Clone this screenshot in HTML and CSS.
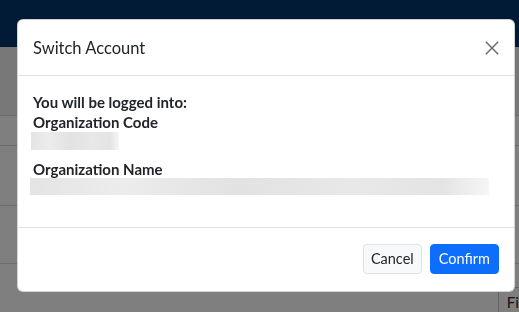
FILE: index.html
```html
<!DOCTYPE html>
<html lang="en">
<head>
  <meta charset="UTF-8">
  <meta name="viewport" content="width=device-width, initial-scale=1.0">
  <title>Switch Account</title>
  <link rel="stylesheet" href="styles.css">
</head>
<body>
  <!-- pagina por tras do modal -->
  <div class="page">
    <nav class="navbar"></nav>
    <div class="table">
      <div class="row row-head"></div>
      <div class="row row-a"></div>
      <div class="row row-b"></div>
      <div class="row row-c"></div>
    </div>
    <div class="toolbar">
      <button class="btn-filter">Filter</button>
    </div>
  </div>

  <!-- Modal -->
  <div class="backdrop">
    <div class="modal">
      <div class="modal-header">
        <h5 class="modal-title">Switch Account</h5>
        <button class="btn-close" aria-label="Close">
          <svg width="14" height="14" viewBox="0 0 14 14">
            <path d="M0.8 0.8 L13.2 13.2 M13.2 0.8 L0.8 13.2" stroke="#6c6c6c" stroke-width="1.5" fill="none"/>
          </svg>
        </button>
      </div>
      <div class="modal-body">
        <div class="label">You will be logged into:</div>
        <div class="label">Organization Code</div>
        <div class="blur blur-code"></div>
        <div class="label label-name">Organization Name</div>
        <div class="blur blur-name"></div>
      </div>
      <div class="modal-footer">
        <button class="btn btn-light">Cancel</button>
        <button class="btn btn-primary">Confirm</button>
      </div>
    </div>
  </div>
</body>
</html>
```

FILE: styles.css
```css
html, body {
  margin: 0;
  height: 100%;
  overflow: hidden;
}

body {
  font-family: "Segoe UI", Lato, sans-serif;
  font-size: 15px;
  color: #212529;
  background: #fff;
}

/* pagina de fundo */
.page {
  width: 556px;
  display: flex;
  flex-direction: column;
}

.navbar {
  height: 47px;
  background: #03346a;
}

.table {
  display: flex;
  flex-direction: column;
}

.row {
  border-bottom: 1px solid #d8d8d8;
}

.row-head {
  height: 68px;
  background: #f0f0f0;
}

.row-a { height: 29px; }
.row-b { height: 59px; }
.row-c { height: 57px; }

.toolbar {
  display: flex;
  justify-content: flex-end;
  padding: 23px 6px 0 0;
}

.btn-filter {
  font-family: inherit;
  font-size: 15px;
  color: #212529;
  background: #fff;
  border: 1px solid #c8c8c8;
  border-radius: 4px;
  padding: 4px 8px;
  line-height: 20px;
}

/* modal */
.backdrop {
  position: fixed;
  top: 0;
  left: 0;
  width: 100%;
  height: 100%;
  background: rgba(0, 0, 0, 0.5);
  display: flex;
  align-items: flex-start;
  padding: 19px 0 0 17px;
  box-sizing: border-box;
}

.modal {
  width: 498px;
  background: #fff;
  border: 1px solid rgba(0, 0, 0, 0.175);
  border-radius: 6px;
  box-sizing: border-box;
}

.modal-header {
  display: flex;
  align-items: center;
  justify-content: space-between;
  padding: 16px 15px 15px;
  border-bottom: 1px solid #dee2e6;
}

.modal-title {
  margin: 0;
  font-size: 16.5px;
  font-weight: 400;
  line-height: 24px;
}

.btn-close {
  background: none;
  border: none;
  padding: 0;
  width: 14px;
  height: 14px;
  margin-right: 0;
  display: flex;
}

.modal-body {
  padding: 16px 15px 32px;
}

.label {
  font-weight: 700;
  line-height: 20px;
}

.label-name {
  margin-top: 9px;
}

.blur {
  background: linear-gradient(90deg, #e4e4e4 0%, #ececec 20%, #e2e2e2 45%, #e8e8e8 70%, #e4e4e4 90%, #f6f6f6 100%);
}

.blur-code {
  width: 88px;
  height: 18px;
  margin-left: -2px;
}

.blur-name {
  width: 459px;
  height: 17px;
  margin: -1px 0 0 -3px;
}

.modal-footer {
  display: flex;
  justify-content: flex-end;
  padding: 12px 11px 13px 12px;
  border-top: 1px solid #dee2e6;
}

.btn {
  font-family: inherit;
  font-size: 14.5px;
  line-height: 20px;
  padding: 4px 8px;
  margin: 4px;
  border-radius: 4px;
  border: 1px solid transparent;
  cursor: pointer;
}

.btn-light {
  background: #f8f9fa;
  border-color: #dee2e6;
  color: #212529;
  padding: 4px 7px;
}

.btn-primary {
  background: #0d6efd;
  border-color: #0d6efd;
  color: #fff;
}
```
